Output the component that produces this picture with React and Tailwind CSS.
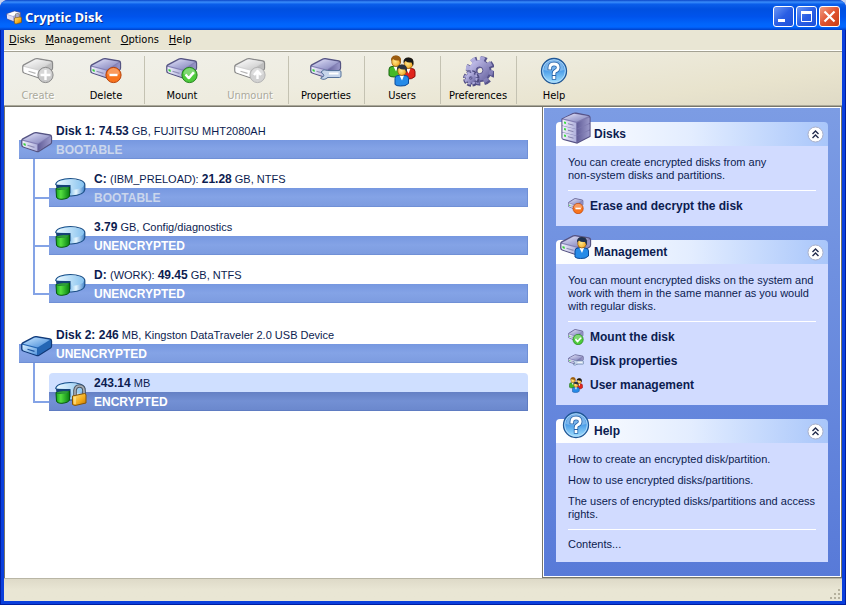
import { useState } from 'react'
import clsx from 'clsx'

const disks = [
  {
    name: 'Disk 1:', size: '74.53', info: 'GB, FUJITSU MHT2080AH', status: 'BOOTABLE', icon: 'hdd',
    parts: [
      { name: 'C:', label: '(IBM_PRELOAD):', size: '21.28', info: 'GB, NTFS', status: 'BOOTABLE' },
      { size: '3.79', info: 'GB, Config/diagnostics', status: 'UNENCRYPTED' },
      { name: 'D:', label: '(WORK):', size: '49.45', info: 'GB, NTFS', status: 'UNENCRYPTED' },
    ],
  },
  {
    name: 'Disk 2:', size: '246', info: 'MB, Kingston DataTraveler 2.0 USB Device', status: 'UNENCRYPTED', icon: 'usb',
    parts: [{ size: '243.14', info: 'MB', status: 'ENCRYPTED' }],
  },
]

// gradients shared by every icon
function Defs() {
  return (
    <svg className="absolute h-0 w-0" aria-hidden="true">
      <defs>
        <linearGradient id="top" x1="0" y1="0" x2="1" y2="1">
          <stop offset="0" stopColor="#e9e9fa" />
          <stop offset="0.45" stopColor="#b3b4dc" />
          <stop offset="1" stopColor="#7f80b8" />
        </linearGradient>
        <linearGradient id="side" x1="0" y1="0" x2="1" y2="0">
          <stop offset="0" stopColor="#625e99" />
          <stop offset="1" stopColor="#9a98c9" />
        </linearGradient>
        <linearGradient id="front" x1="0" y1="0" x2="1" y2="0">
          <stop offset="0" stopColor="#f1f1fb" />
          <stop offset="1" stopColor="#b0b1dc" />
        </linearGradient>
        <linearGradient id="grayTop" x1="0" y1="0" x2="1" y2="1">
          <stop offset="0" stopColor="#ffffff" />
          <stop offset="1" stopColor="#c6c6c6" />
        </linearGradient>
        <linearGradient id="usbTop" x1="0" y1="0" x2="1" y2="1">
          <stop offset="0" stopColor="#c9e7ff" />
          <stop offset="1" stopColor="#4288d8" />
        </linearGradient>
        <linearGradient id="usbFront" x1="0" y1="0" x2="1" y2="1">
          <stop offset="0" stopColor="#d8efff" />
          <stop offset="1" stopColor="#5596de" />
        </linearGradient>
        <linearGradient id="cyl" x1="0" y1="0" x2="1" y2="0">
          <stop offset="0.4" stopColor="#5fa9e2" />
          <stop offset="0.7" stopColor="#e6f7ff" />
          <stop offset="1" stopColor="#3f82cb" />
        </linearGradient>
        <linearGradient id="cylTop" x1="0" y1="0" x2="1" y2="0">
          <stop offset="0" stopColor="#eefaff" />
          <stop offset="1" stopColor="#86c2ef" />
        </linearGradient>
        <linearGradient id="green" x1="0" y1="0" x2="1" y2="0">
          <stop offset="0" stopColor="#13a51d" />
          <stop offset="0.35" stopColor="#55e03f" />
          <stop offset="1" stopColor="#078012" />
        </linearGradient>
        <linearGradient id="gold" x1="0" y1="0" x2="1" y2="1">
          <stop offset="0" stopColor="#ffe683" />
          <stop offset="0.6" stopColor="#f3aa18" />
          <stop offset="1" stopColor="#bd7304" />
        </linearGradient>
        <linearGradient id="help" x1="0" y1="0" x2="0" y2="1">
          <stop offset="0" stopColor="#4a91da" />
          <stop offset="0.5" stopColor="#4e9fe9" />
          <stop offset="1" stopColor="#a5e3ff" />
        </linearGradient>
        <linearGradient id="gear" x1="0" y1="0" x2="1" y2="1">
          <stop offset="0" stopColor="#bcb9e6" />
          <stop offset="1" stopColor="#7773ad" />
        </linearGradient>
        <radialGradient id="face" cx="0.4" cy="0.5" r="0.6">
          <stop offset="0" stopColor="#ffe88a" />
          <stop offset="1" stopColor="#f2a51e" />
        </radialGradient>
      </defs>
    </svg>
  )
}

const badges = {
  add: { fill: '#c9c9c9', edge: '#8a8a8a', mark: 'M23.500 15v10M18.500 20h10' },
  remove: { fill: '#f8741e', edge: '#b8430a', mark: 'M19.500 20h8' },
  ok: { fill: '#4ecb3c', edge: '#23831d', mark: 'M19.500 19.500l3.300 3.600 5-5.800' },
  eject: { fill: '#d2d2d2', edge: '#b3b3b3', mark: 'M23.500 24v-7M20 20l3.500-4 3.500 4' },
}

const skins = {
  hdd: { edge: '#555482', body: '#8481b6', top: 'url(#top)', front: 'url(#front)', side: 'url(#side)', line: '#8f8eb8' },
  usb: { edge: '#123a78', body: '#2365b3', top: 'url(#usbTop)', front: 'url(#usbFront)', side: '#2566b4', line: '#1c559f' },
  gray: { edge: '#8a8a8a', body: '#d3d3d3', top: 'url(#grayTop)', front: '#ffffff', side: '#bdbdbd', line: '#b5b5b5' },
}

function Badge({ kind }) {
  const b = badges[kind]
  return (
    <>
      <circle cx="23.500" cy="20" r="7.600" fill={b.fill} stroke={b.edge} />
      <path d="M17.500 19a6 6 0 0112 0q-6 3-12 0z" fill="#fff" opacity="0.28" />
      <path d={b.mark} fill="none" stroke="#fff" strokeWidth="2.400" strokeLinejoin="round" />
    </>
  )
}

function DriveBody({ skin = 'hdd' }) {
  const s = skins[skin]
  return (
    <>
      <path d="M.8 11.500q0-1 1-1.600l11-5.900q1.200-.6 2.500-.4l13.500 2.400q1.700.3 1.700 2v5q0 1.200-1 1.900l-11.500 7.400q-1.200.7-2.500.2l-13.200-4.500q-1.500-.5-1.500-2z"
        fill={s.body} stroke={s.edge} strokeWidth="1.300" strokeLinejoin="round" />
      <path d="M2 10.700l11.300-6q1-.4 2-.3l13.700 2.400-11.500 7.200q-.8.400-1.700.2z" fill={s.top} />
      <path d="M1.500 11.800l14.500 3.700v6.500l-13-4.300q-1.500-.5-1.500-1.900z" fill={s.front} />
      <path d="M17 15.300l12.800-7.800v5.700q0 .7-.7 1.200l-12.100 7.600z" fill={s.side} />
      <path d="M6.500 16.200l7 2.200" stroke={s.line} strokeWidth="1.200" />
      {skin === 'hdd' && <path d="M2.500 14l2.200.7v2.200l-2.200-.8z" fill="#35cf3c" />}
    </>
  )
}

function Drive({ badge, skin }) {
  return (
    <svg viewBox="0 0 32 32" className="size-8" aria-hidden="true">
      <DriveBody skin={skin} />
      {badge && <Badge kind={badge} />}
    </svg>
  )
}

// 16px version, where the badge covers most of the drive
function SmallDrive({ badge }) {
  return (
    <svg viewBox="0 0 32 32" className="size-4" aria-hidden="true">
      <g transform="translate(0 -3) scale(.98 1.150)"><DriveBody /></g>
      <g transform="translate(-11.500 -6) scale(1.350)"><Badge kind={badge} /></g>
    </svg>
  )
}

function PropertiesIcon({ className = 'size-8' }) {
  return (
    <svg viewBox="0 0 32 32" className={className} aria-hidden="true">
      <DriveBody />
      <path d="M11 17a5 5 0 016.500-1.500h12q1.500 0 1.500 1.500v4q0 1.500-1.500 1.500h-12a5 5 0 01-7 .8l3.500-2.500-1-2z" fill="#c6d5ea" stroke="#57739b" />
      <path d="M19 17.500h9.500v2h-9.500z" fill="#fff" />
    </svg>
  )
}

function Person({ x, y, shirt, dark, hair }) {
  return (
    <g transform={`translate(${x} ${y})`}>
      <path d="M0 20v-6q0-3 3-3h7q3.500 0 3.500 3v5q-3 3-8 2.500-4 0-5.500-1.500z" fill={shirt} stroke={dark} />
      <path d="M4.500 11h4.500l-2 5z" fill="#fff" />
      <path d="M2.800 4.500q0-4 4-4 4.500 0 4.500 4v3q-1 3.500-4.500 3.500t-4-3.500z" fill="url(#face)" stroke="#8b5308" strokeWidth="0.7" />
      <path d="M2 5.500q-.5-5.500 5-5.500t5 6l-.5 2.500-1.500-3.500q-4 .5-6-1.500z" fill={hair} />
    </g>
  )
}

function UsersIcon({ className = 'size-8' }) {
  return (
    <svg viewBox="0 0 32 32" className={className} aria-hidden="true">
      <Person x={3} y={0.5} shirt="#45b927" dark="#17650e" hair="#9a5c10" />
      <Person x={15.5} y={2.5} shirt="#e0241c" dark="#8b0d0a" hair="#171717" />
      <Person x={9} y={9.5} shirt="#268be8" dark="#0c4a98" hair="#29323f" />
    </svg>
  )
}

function GearsIcon() {
  return (
    <svg viewBox="0 0 32 32" className="size-8" aria-hidden="true">
      <g fill="none">
        <circle cx="18.500" cy="16" r="11.500" stroke="#56538a" strokeWidth="6.500" strokeDasharray="5.400 3.632" />
        <circle cx="18.500" cy="16" r="7" stroke="#56538a" strokeWidth="8" />
        <circle cx="17.500" cy="15.300" r="11.300" stroke="url(#gear)" strokeWidth="5" strokeDasharray="4.600 4.275" />
        <circle cx="17.500" cy="15.300" r="6.700" stroke="url(#gear)" strokeWidth="7" />
        <circle cx="17.500" cy="15.300" r="3.400" stroke="#605c94" />
        <circle cx="9.300" cy="23.500" r="5.700" stroke="#4e4b80" strokeWidth="5" strokeDasharray="3.200 1.277" />
        <circle cx="9.300" cy="23.500" r="3.600" stroke="#56538a" strokeWidth="5" />
        <circle cx="8.800" cy="23" r="5.300" stroke="#a9a6d6" strokeWidth="3" strokeDasharray="2.500 1.663" />
        <circle cx="8.800" cy="23" r="3.300" stroke="url(#gear)" strokeWidth="3.200" />
      </g>
    </svg>
  )
}

function HelpIcon() {
  return (
    <svg viewBox="0 0 32 32" className="size-8" aria-hidden="true">
      <circle cx="16" cy="16" r="12.500" fill="url(#help)" stroke="#205694" strokeWidth="1.300" />
      <circle cx="16" cy="16" r="11.300" fill="none" stroke="#b7defa" strokeWidth="0.900" />
      <path d="M6 15a10 10 0 0120 0q-10 3-20 0z" fill="#fff" opacity="0.25" />
      <g fill="none" strokeLinecap="square">
        <path d="M11.800 13q0-4 4.200-4t4.200 3.500q0 2.500-2.700 3.500-1.500.6-1.500 2.500M16 22.300v.3" stroke="#2663a9" strokeWidth="4.400" />
        <path d="M11.800 13q0-4 4.200-4t4.200 3.500q0 2.500-2.700 3.500-1.500.6-1.500 2.500M16 22.300v.3" stroke="#fff" strokeWidth="2.800" />
      </g>
    </svg>
  )
}

function StackIcon() {
  return (
    <svg viewBox="0 0 32 32" className="size-8" aria-hidden="true">
      <path d="M2 7l11-5.500q1.500-.6 3-.3l12.500 2.300q1.500.5 1.500 2v19l-13 6.500-13.500-3.500q-1.500-.5-1.500-2z" fill="#7e7ab0" stroke="#565285" strokeWidth="1.200" />
      <path d="M3 6.500l11-4.800 14.500 2.600-12 5.400z" fill="url(#top)" />
      {[7.5, 14, 20.5].map((y) => (
        <g key={y} transform={`translate(0 ${y})`}>
          <path d="M2.500 0l13.500 3.300v6.200l-13.500-3.500z" fill="url(#front)" />
          <path d="M17 3.300l12.500-5.300v5.500l-12.500 6z" fill="url(#side)" />
          <path d="M4 2l2 .6v2l-2-.6z" fill="#3fdd43" />
          <path d="M8 4.200l5.500 1.500" stroke="#8583ae" />
        </g>
      ))}
    </svg>
  )
}

function DriveUserIcon() {
  return (
    <svg viewBox="0 0 32 32" className="size-8" aria-hidden="true">
      <g transform="translate(0 2)"><DriveBody /></g>
      <g transform="translate(3 0)">
        <Person x={12} y={7} shirt="#268be8" dark="#0c4a98" hair="#1e3150" />
      </g>
    </svg>
  )
}

function PartitionIcon({ locked }) {
  return (
    <svg viewBox="0 0 32 32" className="size-8" aria-hidden="true">
      <path d="M.8 11.500a14.500 6 0 0129 0v5q-.5 5.500-13.500 6.500h-3v-8z" fill="url(#cyl)" stroke="#1c4f86" strokeWidth="1.200" />
      <path d="M15.300 12.300l-13.800-.8a13.800 5.300 0 0127.600 0q-.5 4.500-12.100 5.400z" fill="url(#cylTop)" />
      <path d="M1 12l14.500 0v8l-2 3-12-6z" fill="#164277" />
      <path d="M1 15.500q4 1.500 8 .5l5.500-2v9q-1 2.700-7.500 3.300-5 0-5.500-2.300z" fill="url(#green)" stroke="#07580d" />
      <path d="M1.500 15.500q3-1.500 7-1.500l5.500.2q-2 2.800-7 2.800-3.500-.3-5.500-1.500z" fill="#2f9d3a" />
      {locked && (
        <g transform="translate(-.5 1.500)">
          <path d="M20.500 18v-6q.5-4.500 4.500-4.500 4.500 0 4.500 5v5" fill="none" stroke="#4e555f" strokeWidth="3.600" />
          <path d="M20.500 18v-6q.5-4.500 4.500-4.500 4.500 0 4.500 5v5" fill="none" stroke="#aab1b9" strokeWidth="1.600" />
          <path d="M18 17.500l12-2.500 1.500 1v8.500l-11 2.500-2.500-1z" fill="url(#gold)" stroke="#875405" />
          <path d="M20.500 18.500v7" stroke="#fff1b0" />
        </g>
      )}
    </svg>
  )
}

function AppIcon() {
  return (
    <svg viewBox="0 0 16 16" className="size-4" aria-hidden="true">
      <path d="M.5 5l8-3 6 1.500v5.500l-7 3.500-6-2.500z" fill="#a9a8d6" stroke="#4c4a86" strokeWidth="0.6" />
      <path d="M1 5l7.500-2.500 5.500 1.500-7 3z" fill="#fff" />
      <path d="M1 5.700l6 2v4l-6-2.300z" fill="#deddf3" />
      <path d="M9.500 9v-2.500q0-2 2-2t2 2v2.500" fill="none" stroke="#8b8b8b" strokeWidth="1.200" />
      <path d="M8.500 9l5.500-1 1.500.5v5l-5.500 1.500-1.500-.7z" fill="url(#gold)" stroke="#805008" strokeWidth="0.600" />
    </svg>
  )
}

function TitleBar() {
  const btn = 'flex size-[21px] items-center justify-center rounded-[3px] border border-white'
  return (
    <header className="flex h-[30px] items-center rounded-t-lg bg-linear-[180deg,#0a46c8_0,#3a8dfb_7%,#0a5eea_14%,#0050e0_30%,#0053ec_55%,#0165fb_80%,#0166ff_90%,#0040c8_100%] px-[6px] pt-[3px]">
      <AppIcon />
      <h1 className="ml-[3px] flex-1 font-['Open_Sans',sans-serif] text-[13px] leading-4 font-bold text-white text-shadow-[1px_1px_0_#0b2f90]">Cryptic Disk</h1>
      <div className="flex gap-[2px]">
        <button aria-label="Minimize" className={clsx(btn, 'bg-linear-135 from-[#6c95f4] via-[#2a5ee4] to-[#1b50da]')}>
          <svg viewBox="0 0 19 19" className="size-[19px]"><path d="M4 12h7v3h-7z" fill="#fff" /></svg>
        </button>
        <button aria-label="Maximize" className={clsx(btn, 'bg-linear-135 from-[#6c95f4] via-[#2a5ee4] to-[#1b50da]')}>
          <svg viewBox="0 0 19 19" className="size-[19px]"><path d="M4.500 5.500h10v9h-10z" fill="none" stroke="#fff" /><path d="M4 4h11v3h-11z" fill="#fff" /></svg>
        </button>
        <button aria-label="Close" className={clsx(btn, 'bg-linear-135 from-[#f0997f] via-[#e0532f] to-[#c83c12]')}>
          <svg viewBox="0 0 19 19" className="size-[19px]"><path d="M4.500 4.500l10 10M14.500 4.500l-10 10" stroke="#fff" strokeWidth="2.200" /></svg>
        </button>
      </div>
    </header>
  )
}

function MenuBar() {
  return (
    <nav className="flex h-[21px] items-center gap-[10px] border-b border-[#fffffb] bg-[#e9e6d4] pl-[5px]">
      {['Disks', 'Management', 'Options', 'Help'].map((m) => (
        <button key={m}><span className="underline underline-offset-1">{m[0]}</span>{m.slice(1)}</button>
      ))}
    </nav>
  )
}

function ToolButton({ icon, label, disabled }) {
  return (
    <button disabled={disabled} className={clsx('flex w-[68px] flex-col items-center gap-[2px]', disabled && 'text-[#aaa99c] text-shadow-[1px_1px_0_#fff]')}>
      {icon}
      <span className="leading-[13px]">{label}</span>
    </button>
  )
}

function Separator() {
  return <div className="my-px flex w-2 justify-center self-stretch"><div className="w-px bg-[#c4c2b2]" /></div>
}

function Toolbar() {
  return (
    <div className="flex h-[54px] shrink-0 items-start border-t border-[#a3a193] bg-linear-[172deg,#f1f1ec_0%,#eeecdf_45%,#e8e3cd_80%,#dfdac6_100%] pt-[3px]">
      <ToolButton icon={<Drive skin="gray" badge="add" />} label="Create" disabled />
      <ToolButton icon={<Drive badge="remove" />} label="Delete" />
      <Separator />
      <ToolButton icon={<Drive badge="ok" />} label="Mount" />
      <ToolButton icon={<Drive skin="gray" badge="eject" />} label="Unmount" disabled />
      <Separator />
      <ToolButton icon={<PropertiesIcon />} label="Properties" />
      <Separator />
      <ToolButton icon={<UsersIcon />} label="Users" />
      <Separator />
      <ToolButton icon={<GearsIcon />} label="Preferences" />
      <Separator />
      <ToolButton icon={<HelpIcon />} label="Help" />
    </div>
  )
}

function Row({ item, icon, child, selected, onClick }) {
  const pad = child ? 'pl-[45px]' : 'pl-[37px]'
  return (
    <button onClick={onClick} className="relative block w-full min-w-0 text-left">
      <div className={clsx('h-[19px] truncate leading-[21px] text-[#0c1c50]', pad, selected && 'rounded-t-sm bg-[#cfdfff]')}>
        {item.name && <b className="text-xs leading-[21px]">{item.name} </b>}
        {item.label && <span>{item.label} </span>}
        <b className="text-xs leading-[21px]">{item.size}</b> {item.info}
      </div>
      <div className={clsx(
        'h-[19px] border-r border-b text-xs leading-[21px] font-bold', pad,
        selected ? 'border-[#5f7cc2] bg-linear-to-b from-[#6580c4] via-[#7390d4] to-[#6b88cd]' : 'border-[#7090d6] bg-linear-to-b from-[#7798e0] via-[#84a3e6] to-[#7d9ce0]',
        item.status === 'BOOTABLE' ? 'text-[#cbd6ec]' : 'text-white',
      )}>{item.status}</div>
      <span className={clsx('absolute', child ? 'top-1 left-[6px]' : 'top-2 left-[2px]')}>{icon}</span>
    </button>
  )
}

function DiskList() {
  const [selected, setSelected] = useState('243.14')
  return (
    <main className="min-w-0 flex-1 border-t border-l border-[#77756a] bg-white px-[14px] pt-[14px]">
      <ul className="flex flex-col gap-[22px]">
        {disks.map((d) => (
          <li key={d.name}>
            <Row item={d} icon={<Drive skin={d.icon} />} selected={selected === d.size} onClick={() => setSelected(d.size)} />
            <ul className="ml-[14px]">
              {d.parts.map((p, i) => (
                <li key={p.size} className="flex">
                  <div className="flex w-4 shrink-0 flex-col">
                    <div className="h-10 border-b-2 border-l-2 border-[#84a3e6]" />
                    {i < d.parts.length - 1 && <div className="flex-1 border-l-2 border-[#84a3e6]" />}
                  </div>
                  <div className="min-w-0 flex-1 pt-[10px]">
                    <Row item={p} child icon={<PartitionIcon locked={p.status === 'ENCRYPTED'} />} selected={selected === p.size} onClick={() => setSelected(p.size)} />
                  </div>
                </li>
              ))}
            </ul>
          </li>
        ))}
      </ul>
    </main>
  )
}

function Card({ title, icon, children }) {
  const [open, setOpen] = useState(true)
  return (
    <section className="text-[#0c1c50]">
      <div className="relative flex h-6 items-center rounded-t-sm bg-linear-to-r from-white via-[#e3edff] to-[#a9c6fa] pr-1 pl-[38px]">
        <span className="absolute bottom-[2px] left-1">{icon}</span>
        <h2 className="flex-1 text-xs font-bold">{title}</h2>
        <button onClick={() => setOpen(!open)} aria-label={`Toggle ${title}`} className="rounded-full">
          <svg viewBox="0 0 17 17" className={clsx('size-[17px]', !open && 'rotate-180')}>
            <circle cx="8.500" cy="8.500" r="7.500" fill="#fff" stroke="#a9b0c9" />
            <path d="M5.500 8l3-3 3 3M5.500 12l3-3 3 3" fill="none" stroke="#222b4d" strokeWidth="1.400" />
          </svg>
        </button>
      </div>
      {open && <div className="bg-[#d1dbff] px-3 pt-[10px]">{children}</div>}
    </section>
  )
}

function Action({ icon, children }) {
  return (
    <a href="#" className="flex h-6 items-center gap-[6px] text-xs font-bold">
      {icon}
      {children}
    </a>
  )
}

function Sidebar() {
  return (
    <aside className="w-[300px] shrink-0 border border-[#77756a]">
      <div className="flex h-full flex-col gap-[14px] border border-white bg-linear-to-b from-[#7c9ce4] to-[#587ad8] px-3 pt-[14px] leading-[13px]">
        <Card title="Disks" icon={<StackIcon />}>
          <p>You can create encrypted disks from any<br />non-system disks and partitions.</p>
          <div className="mt-2 border-t border-white pt-[3px] pb-2">
            <Action icon={<SmallDrive badge="remove" />}>Erase and decrypt the disk</Action>
          </div>
        </Card>
        <Card title="Management" icon={<DriveUserIcon />}>
          <p>You can mount encrypted disks on the system and work with them in the same manner as you would with regular disks.</p>
          <div className="mt-2 border-t border-white pt-[3px] pb-2">
            <Action icon={<SmallDrive badge="ok" />}>Mount the disk</Action>
            <Action icon={<PropertiesIcon className="size-4" />}>Disk properties</Action>
            <Action icon={<UsersIcon className="size-4" />}>User management</Action>
          </div>
        </Card>
        <Card title="Help" icon={<HelpIcon />}>
          <div className="flex flex-col gap-2">
            <a href="#">How to create an encrypted disk/partition.</a>
            <a href="#">How to use encrypted disks/partitions.</a>
            <a href="#">The users of encrypted disks/partitions and access rights.</a>
          </div>
          <div className="mt-2 flex border-t border-white pt-2 pb-[11px]">
            <a href="#">Contents...</a>
          </div>
        </Card>
      </div>
    </aside>
  )
}

function App() {
  return (
    <div className="min-h-screen bg-[#c9d3ee] text-[11px]">
      <Defs />
      <div className="flex min-h-screen flex-col rounded-t-lg bg-[#0831d9]">
        <TitleBar />
        <div className="flex flex-1 flex-col border-x border-b border-[#001ea0]">
          <div className="flex flex-1 flex-col border-x-3 border-b-3 border-[#0a3fdc] bg-[#e9e6d4]">
            <div className="font-['DejaVu_Sans_Condensed','DejaVu_Sans',sans-serif]">
              <MenuBar />
              <Toolbar />
            </div>
            <div className="flex flex-1 border-t border-[#aaa899] font-['Liberation_Sans',Arial,sans-serif]">
              <DiskList />
              <Sidebar />
            </div>
            <footer className="flex h-[23px] items-end justify-end border-t border-[#b9b6a5] bg-linear-to-b from-[#dedac8] via-[#e9e6d4] to-[#e9e6d4] p-px">
              <svg viewBox="0 0 12 12" className="size-3" aria-hidden="true">
                <path d="M9 1h2v2h-2zM5 5h2v2h-2zM9 5h2v2h-2zM1 9h2v2h-2zM5 9h2v2h-2zM9 9h2v2h-2z" fill="#b5b19d" />
              </svg>
            </footer>
          </div>
        </div>
      </div>
    </div>
  )
}

export default App
